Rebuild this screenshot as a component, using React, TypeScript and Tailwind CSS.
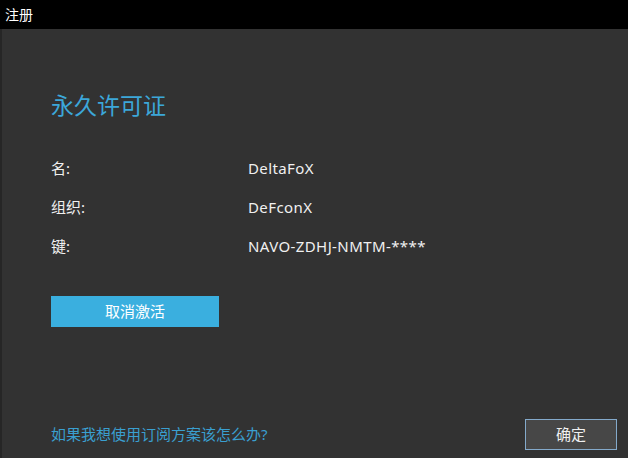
import React from "react";

export default function App() {
  const font = { fontFamily: '"Noto Sans", "Noto Sans CJK SC", sans-serif' };
  return (
    <div className="w-[628px] h-[458px] bg-[#323232] flex flex-col overflow-hidden" style={font}>
      <div className="h-[29px] bg-black text-white text-[14px] leading-[29px] pl-[5px] shrink-0">注册</div>
      <div className="flex-1 flex border-l-2 border-[#262626]">
        <div className="flex-1 flex flex-col pl-[49px] pr-[10px]">
          <div className="mt-[60px] text-[23px] leading-[32px] text-[#3ca7d9]">永久许可证</div>
          <div className="mt-[33px] flex flex-col gap-[11px] text-[15px] text-[#f0f0f0]">
            <div className="flex h-[28px] items-center"><span className="w-[197px]">名:</span><span className="tracking-[0.4px]">DeltaFoX</span></div>
            <div className="flex h-[28px] items-center"><span className="w-[197px]">组织:</span><span className="tracking-[0.4px]">DeFconX</span></div>
            <div className="flex h-[28px] items-center"><span className="w-[197px]">键:</span><span className="tracking-[0.4px]">NAVO-ZDHJ-NMTM-****</span></div>
          </div>
          <div className="mt-[36px] w-[168px] h-[31px] bg-[#3aafdf] text-white text-[15px] flex items-center justify-center">取消激活</div>
          <div className="mt-auto mb-[8px] flex items-end justify-between">
            <span className="text-[15px] text-[#3a9fd0] mb-[5px]">如果我想使用订阅方案该怎么办?</span>
            <div className="w-[92px] h-[31px] mr-[1px] bg-[#474747] border border-[#84aacb] text-[#f0f0f0] text-[15px] flex items-center justify-center">确定</div>
          </div>
        </div>
      </div>
    </div>
  );
}
